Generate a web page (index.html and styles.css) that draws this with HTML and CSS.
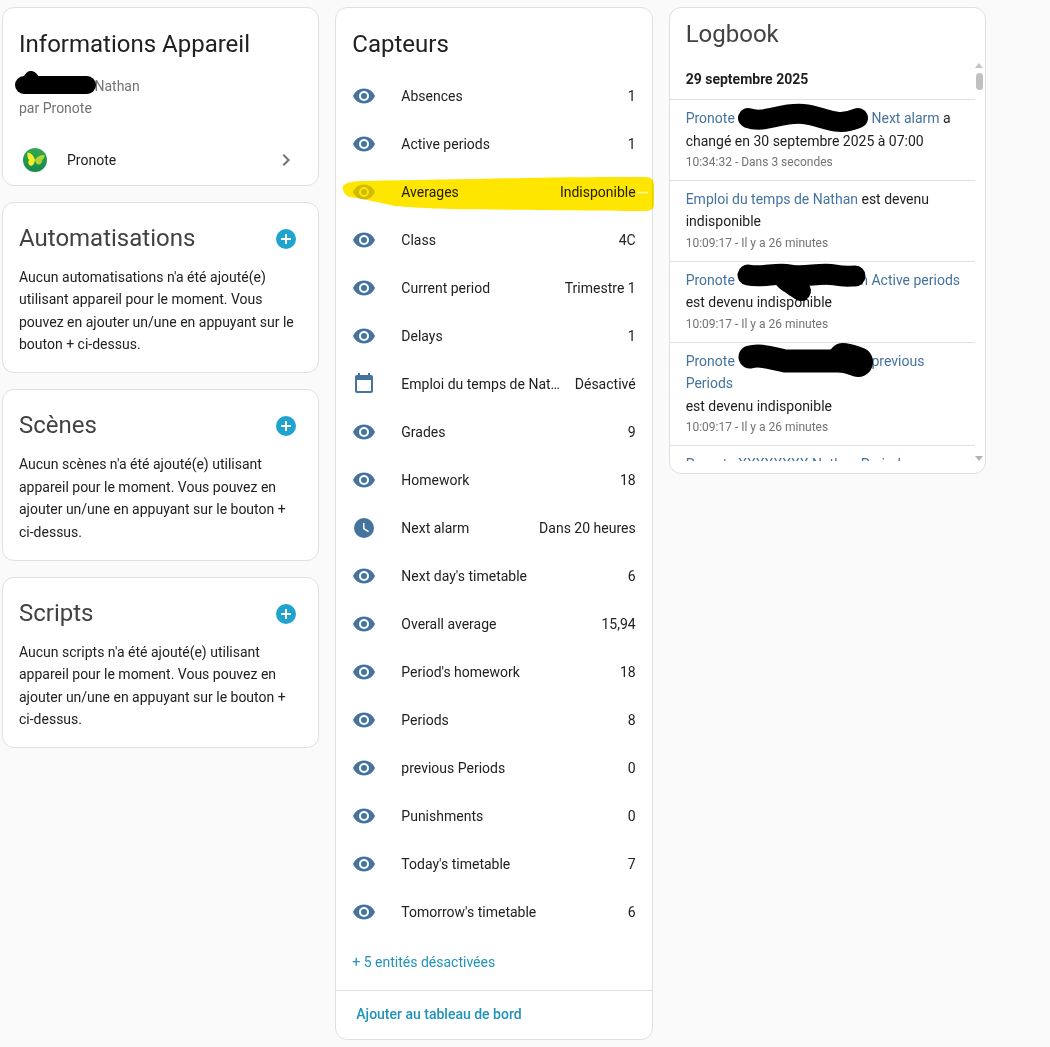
FILE: index.html
```html
<!DOCTYPE html>
<html lang="fr">
  <head>
    <meta charset="UTF-8" />
    <meta name="viewport" content="width=device-width, initial-scale=1.0" />
    <title>Pronote</title>
    <link rel="stylesheet" href="styles.css">
  </head>
  <body>
    <svg class="icon-defs" aria-hidden="true">
      <symbol id="eye" viewBox="0 0 24 24"><path d="M12,9A3,3 0 0,0 9,12A3,3 0 0,0 12,15A3,3 0 0,0 15,12A3,3 0 0,0 12,9M12,17A5,5 0 0,1 7,12A5,5 0 0,1 12,7A5,5 0 0,1 17,12A5,5 0 0,1 12,17M12,4.5C7,4.5 2.73,7.61 1,12C2.73,16.39 7,19.5 12,19.5C17,19.5 21.27,16.39 23,12C21.27,7.61 17,4.5 12,4.5Z"/></symbol>
      <symbol id="calendar" viewBox="0 0 24 24"><path d="M19 19H5V8H19M16 1V3H8V1H6V3H5C3.89 3 3 3.89 3 5V19C3 20.1 3.9 21 5 21H19C20.1 21 21 20.1 21 19V5C21 3.89 20.1 3 19 3H18V1"/></symbol>
      <symbol id="clock" viewBox="0 0 24 24"><path d="M12,2A10,10 0 0,0 2,12A10,10 0 0,0 12,22A10,10 0 0,0 22,12A10,10 0 0,0 12,2M16.2,16.2L11,13V7H12.5V12.2L17,14.9L16.2,16.2Z"/></symbol>
      <symbol id="plus" viewBox="0 0 24 24"><path d="M17,13H13V17H11V13H7V11H11V7H13V11H17M12,2A10,10 0 0,0 2,12A10,10 0 0,0 12,22A10,10 0 0,0 22,12A10,10 0 0,0 12,2Z"/></symbol>
    </svg>

    <div class="page">
      <div class="column">
        <section class="card">
          <h1 class="card-title info-title">Informations Appareil</h1>
          <div class="device-lines">
            <div><span class="name-gap short"></span> Nathan</div>
            <div>par Pronote</div>
          </div>
          <div class="integration">
            <svg class="pronote-logo" viewBox="0 0 24 24">
              <defs>
                <linearGradient id="logo-green" x1="0" y1="0" x2="0" y2="1">
                  <stop offset="0" stop-color="#35a853" />
                  <stop offset="1" stop-color="#148a4b" />
                </linearGradient>
              </defs>
              <circle cx="12" cy="12" r="12" fill="url(#logo-green)" />
              <path fill="#f4ee2a" d="M12 12C11 8 8.500 5 4.500 4.500C4 7.500 4.500 10 6 12C4.500 14 5.500 17 8 18C10.500 17.500 11.500 15 12 12Z" />
              <path fill="#b5d334" d="M12 12C13.500 9 16.500 7 21.500 7C21.500 9.500 20.500 11 19 12C19.500 14 18 16.500 15.500 16.500C13.500 16.500 12.500 14.500 12 12Z" />
            </svg>
            <span class="integration-name">Pronote</span>
            <svg class="chevron" viewBox="0 0 24 24"><path d="M8.59,16.58L13.17,12L8.59,7.41L10,6L16,12L10,18L8.59,16.58Z"/></svg>
          </div>
        </section>

        <section class="card related">
          <div class="related-head">
            <h2 class="card-title">Automatisations</h2>
            <svg class="add-icon"><use href="#plus" /></svg>
          </div>
          <p class="related-text">Aucun automatisations n'a été ajouté(e) utilisant appareil pour le moment. Vous pouvez en ajouter un/une en appuyant sur le bouton + ci-dessus.</p>
        </section>

        <section class="card related">
          <div class="related-head">
            <h2 class="card-title">Scènes</h2>
            <svg class="add-icon"><use href="#plus" /></svg>
          </div>
          <p class="related-text">Aucun scènes n'a été ajouté(e) utilisant appareil pour le moment. Vous pouvez en ajouter un/une en appuyant sur le bouton + ci-dessus.</p>
        </section>

        <section class="card related">
          <div class="related-head">
            <h2 class="card-title">Scripts</h2>
            <svg class="add-icon"><use href="#plus" /></svg>
          </div>
          <p class="related-text">Aucun scripts n'a été ajouté(e) utilisant appareil pour le moment. Vous pouvez en ajouter un/une en appuyant sur le bouton + ci-dessus.</p>
        </section>
      </div>

      <div class="column">
        <section class="card">
          <h2 class="card-title sensors-title">Capteurs</h2>
          <ul class="sensors">
            <li class="sensor"><svg class="state-icon"><use href="#eye" /></svg><span class="sensor-name">Absences</span><span>1</span></li>
            <li class="sensor"><svg class="state-icon"><use href="#eye" /></svg><span class="sensor-name">Active periods</span><span>1</span></li>
            <li class="sensor off"><svg class="state-icon"><use href="#eye" /></svg><span class="sensor-name">Averages</span><span>Indisponible</span></li>
            <li class="sensor"><svg class="state-icon"><use href="#eye" /></svg><span class="sensor-name">Class</span><span>4C</span></li>
            <li class="sensor"><svg class="state-icon"><use href="#eye" /></svg><span class="sensor-name">Current period</span><span>Trimestre 1</span></li>
            <li class="sensor"><svg class="state-icon"><use href="#eye" /></svg><span class="sensor-name">Delays</span><span>1</span></li>
            <li class="sensor"><svg class="state-icon"><use href="#calendar" /></svg><span class="sensor-name">Emploi du temps de Nathan</span><span>Désactivé</span></li>
            <li class="sensor"><svg class="state-icon"><use href="#eye" /></svg><span class="sensor-name">Grades</span><span>9</span></li>
            <li class="sensor"><svg class="state-icon"><use href="#eye" /></svg><span class="sensor-name">Homework</span><span>18</span></li>
            <li class="sensor"><svg class="state-icon"><use href="#clock" /></svg><span class="sensor-name">Next alarm</span><span>Dans 20 heures</span></li>
            <li class="sensor"><svg class="state-icon"><use href="#eye" /></svg><span class="sensor-name">Next day's timetable</span><span>6</span></li>
            <li class="sensor"><svg class="state-icon"><use href="#eye" /></svg><span class="sensor-name">Overall average</span><span>15,94</span></li>
            <li class="sensor"><svg class="state-icon"><use href="#eye" /></svg><span class="sensor-name">Period's homework</span><span>18</span></li>
            <li class="sensor"><svg class="state-icon"><use href="#eye" /></svg><span class="sensor-name">Periods</span><span>8</span></li>
            <li class="sensor"><svg class="state-icon"><use href="#eye" /></svg><span class="sensor-name">previous Periods</span><span>0</span></li>
            <li class="sensor"><svg class="state-icon"><use href="#eye" /></svg><span class="sensor-name">Punishments</span><span>0</span></li>
            <li class="sensor"><svg class="state-icon"><use href="#eye" /></svg><span class="sensor-name">Today's timetable</span><span>7</span></li>
            <li class="sensor"><svg class="state-icon"><use href="#eye" /></svg><span class="sensor-name">Tomorrow's timetable</span><span>6</span></li>
          </ul>
          <div class="disabled-link">+ 5 entités désactivées</div>
          <div class="card-actions">Ajouter au tableau de bord</div>
        </section>
      </div>

      <div class="column">
        <section class="card logbook">
          <h2 class="card-title logbook-title">Logbook</h2>
          <div class="log-scroll">
            <div class="log-date">29 septembre 2025</div>
            <div class="log-entry">
              <div><a class="log-link">Pronote <span class="name-gap"></span> Nathan Next alarm</a> a changé en 30 septembre 2025 à 07:00</div>
              <div class="log-time">10:34:32 - Dans 3 secondes</div>
            </div>
            <div class="log-entry">
              <div><a class="log-link">Emploi du temps de Nathan</a> est devenu indisponible</div>
              <div class="log-time">10:09:17 - Il y a 26 minutes</div>
            </div>
            <div class="log-entry">
              <div><a class="log-link">Pronote <span class="name-gap"></span> Nathan Active periods</a> est devenu indisponible</div>
              <div class="log-time">10:09:17 - Il y a 26 minutes</div>
            </div>
            <div class="log-entry">
              <div><a class="log-link">Pronote <span class="name-gap"></span> Nathan previous Periods</a></div>
              <div>est devenu indisponible</div>
              <div class="log-time">10:09:17 - Il y a 26 minutes</div>
            </div>
            <div class="log-entry">
              <div><a class="log-link">Pronote XXXXXXXX Nathan Periods</a> a</div>
            </div>
          </div>
          <div class="scrollbar">
            <span class="arrow-up"></span>
            <span class="thumb"></span>
            <span class="arrow-down"></span>
          </div>
        </section>
      </div>

      <!-- marker and pen strokes drawn over the screenshot -->
      <svg class="marks" viewBox="0 0 1050 1047">
        <path class="marker" d="M343 186C345 183 352 181 365 181C420 180 480 179 525 178C570 177 620 177 645 177C652 177 654 180 654 186L654 204C654 209 651 211 645 211C600 211 520 210 450 209C420 208 405 207 395 206C380 203 365 199 350 197C345 196 342 190 343 186Z" />
        <path class="marker-gap" d="M637 192.500H648" />
        <path class="pen" stroke-width="18" d="M24 85H87" />
        <path class="pen" stroke-width="14" d="M31 78L34 82" />
        <path class="pen" stroke-width="20" d="M748 118C765 124 780 112 803 114C825 116 835 128 858 118" />
        <path class="pen" stroke-width="21" d="M748 275C765 278 775 272 790 275C805 278 820 272 835 275C845 277 850 276 855 276" />
        <path class="pen" stroke-width="20" d="M785 280C790 284 797 288 801 291" />
        <path class="pen" stroke-width="23" d="M750 357C760 354 770 358 785 361L838 361" />
        <path class="pen" stroke-width="30" d="M843 358C848 358 852 360 858 362" />
      </svg>
    </div>
  </body>
</html>
```

FILE: styles.css
```css
* {
  box-sizing: border-box;
}
body {
  margin: 0;
  background-color: #fafafa;
  color: #212121;
  font-family: Roboto, "Liberation Sans", sans-serif;
  font-size: 14px;
}
.icon-defs {
  display: none;
}
.page {
  position: relative;
  display: grid;
  grid-template-columns: repeat(3, minmax(0, 1fr));
  column-gap: 16px;
  align-items: start;
  width: 986px;
  height: 1047px;
  padding: 7px 0 7px 2px;
}
.column {
  display: flex;
  flex-direction: column;
  gap: 16px;
}
.card {
  background-color: white;
  border: 1px solid #e0e0e0;
  border-radius: 12px;
}
.card-title {
  margin: 0;
  font-size: 24px;
  font-weight: 400;
  line-height: 32px;
}

/* device info */
.info-title {
  padding: 20px 16px 0;
}
.device-lines {
  margin-top: 15px;
  padding: 0 16px;
  color: #727272;
  line-height: 22px;
}
.name-gap {
  display: inline-block;
  width: 72px;
}
.log-link .name-gap {
  width: 81px;
}
.integration {
  display: flex;
  align-items: center;
  height: 48px;
  margin-top: 17px;
  margin-bottom: 1px;
  padding: 0 20px;
}
.pronote-logo {
  width: 24px;
  height: 24px;
  margin-right: 20px;
}
.integration-name {
  flex: 1;
}
.chevron {
  width: 24px;
  height: 24px;
  fill: #727272;
}

/* automations, scenes, scripts */
.related {
  padding: 19px 16px 16.8px;
}
.related-head {
  display: flex;
  justify-content: space-between;
  align-items: center;
  height: 32px;
}
.related .card-title {
  color: #424242;
}
.add-icon {
  width: 24px;
  height: 24px;
  margin-top: 2px;
  margin-right: 4px;
  fill: #1fa3cf;
}
.related-text {
  margin: 12px 0 0;
  line-height: 22.4px;
}

/* sensors */
.sensors-title {
  padding: 20px 16px 0;
}
.sensors {
  list-style-type: none;
  margin: 12px 0 0;
  padding: 0;
}
.sensor {
  display: flex;
  align-items: center;
  gap: 12px;
  height: 48px;
  padding: 0 16px;
}
.state-icon {
  flex: none;
  width: 24px;
  height: 24px;
  margin-right: 13px;
  fill: #44739e;
}
.sensor-name {
  flex: 1;
  min-width: 0;
  overflow: hidden;
  white-space: nowrap;
  text-overflow: ellipsis;
}
.off .state-icon {
  fill: #cfcfcf;
}
.disabled-link {
  padding: 15px 16px 17px;
  color: #1f93b8;
  line-height: 22px;
}
.card-actions {
  height: 49px;
  padding: 0 20px;
  border-top: 1px solid #e0e0e0;
  color: #1f93b8;
  font-weight: 500;
  line-height: 46px;
}

/* logbook */
.logbook {
  position: relative;
  height: 467px;
}
.logbook-title {
  padding: 10px 16px 0;
  color: #424242;
}
.log-scroll {
  height: 411px;
  overflow: hidden;
}
.log-date {
  height: 50px;
  margin-right: 10px;
  padding: 18px 16px 0;
  border-bottom: 1px solid #e0e0e0;
  font-weight: 700;
  line-height: 22px;
}
.log-entry {
  margin-right: 10px;
  padding: 7px 0 7.9px 16px;
  border-bottom: 1px solid #e0e0e0;
  line-height: 22.5px;
}
.log-link {
  color: #44739e;
}
.log-time {
  color: #727272;
  font-size: 12px;
  line-height: 20px;
}
.scrollbar {
  position: absolute;
  top: 55px;
  right: 2px;
  bottom: 12px;
  display: flex;
  flex-direction: column;
  align-items: center;
  width: 8px;
}
.arrow-up {
  border: 4px solid transparent;
  border-top: 0;
  border-bottom: 5px solid #c4c4c4;
}
.thumb {
  width: 7px;
  height: 17px;
  margin-top: 5px;
  border-radius: 4px;
  background-color: #c1c1c1;
}
.arrow-down {
  margin-top: auto;
  border: 4px solid transparent;
  border-bottom: 0;
  border-top: 5px solid #b4b4b4;
}

/* drawn over the page */
.marks {
  position: absolute;
  top: 0;
  left: 0;
  width: 1050px;
  height: 1047px;
  pointer-events: none;
}
.marker {
  fill: #ffe600;
  mix-blend-mode: multiply;
}
.marker-gap {
  stroke: #fff8b0;
  stroke-width: 1.500;
}
.pen {
  fill: none;
  stroke: black;
  stroke-linecap: round;
  stroke-linejoin: round;
}
```
